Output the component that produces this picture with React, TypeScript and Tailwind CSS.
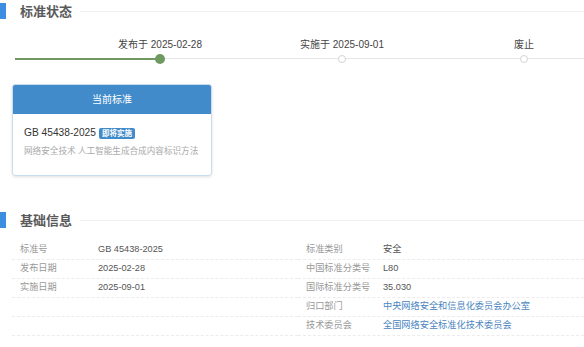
import React from 'react';

const font = { fontFamily: '"Liberation Sans", "Noto Sans CJK SC", sans-serif' };

const SectionTitle = ({ title }: { title: string }) => (
  <div className="flex items-center h-[20px]">
    <div className="w-[6px] h-[16px] bg-[#3d8ee0]" />
    <div className="ml-[14px] text-[13px] font-bold text-[#5a5a5a] leading-none">{title}</div>
    <div className="flex-1 ml-[8px] h-px bg-[#f0f0f0]" />
  </div>
);

const stages = [
  { label: '发布于 2025-02-28', done: true },
  { label: '实施于 2025-09-01', done: false },
  { label: '废止', done: false },
];

const leftRows = [
  ['标准号', 'GB 45438-2025'],
  ['发布日期', '2025-02-28'],
  ['实施日期', '2025-09-01'],
  ['', ''],
  ['', ''],
];

const rightRows: [string, string, boolean][] = [
  ['标准类别', '安全', false],
  ['中国标准分类号', 'L80', false],
  ['国际标准分类号', '35.030', false],
  ['归口部门', '中央网络安全和信息化委员会办公室', true],
  ['技术委员会', '全国网络安全标准化技术委员会', true],
];

export default function App() {
  return (
    <div className="w-[584px] h-[347px] bg-white overflow-hidden" style={font}>
      <div className="pt-[1px]">
        <SectionTitle title="标准状态" />
      </div>

      {/* timeline */}
      <div className="mt-[17px]">
        <div className="flex ml-[69px]">
          {stages.map((s) => (
            <div key={s.label} className="w-[182px] shrink-0 text-center text-[10px] text-[#444] leading-[14px]">
              {s.label}
            </div>
          ))}
        </div>
        <div className="relative h-[10px] mt-[2px]">
          <div className="absolute left-[15px] right-0 top-[4px] h-px bg-[#e6e6e6]" />
          <div className="absolute left-[15px] w-[145px] top-[4px] h-[2px] bg-[#6f9960]" />
          <div className="absolute left-[155px] top-0 w-[10px] h-[10px] rounded-full bg-[#6f9960]" />
          <div className="absolute left-[338px] top-[1px] w-[8px] h-[8px] rounded-full bg-white border border-[#d4d4d4]" />
          <div className="absolute left-[520px] top-[1px] w-[8px] h-[8px] rounded-full bg-white border border-[#d4d4d4]" />
        </div>
      </div>

      {/* current standard card */}
      <div className="ml-[12px] mt-[20px] w-[200px] rounded-[3px] border border-[#c9dcee] shadow-[0_1px_3px_rgba(0,0,0,0.12)] overflow-hidden">
        <div className="h-[29px] bg-[#428bca] flex items-center justify-center text-white text-[10px]">
          当前标准
        </div>
        <div className="px-[11px] pt-[13px] pb-[18px]">
          <div className="flex items-center h-[12px]">
            <span className="text-[10.2px] text-[#333]">GB 45438-2025</span>
            <span className="ml-[3px] px-[3px] h-[11px] leading-[11px] rounded-[2px] bg-[#428bca] text-white text-[7.5px] font-bold">
              即将实施
            </span>
          </div>
          <div className="mt-[6px] text-[8.6px] text-[#aaa] leading-[12px] whitespace-nowrap">
            网络安全技术 人工智能生成合成内容标识方法
          </div>
        </div>
      </div>

      <div className="mt-[34px]">
        <SectionTitle title="基础信息" />
      </div>

      {/* info table */}
      <div className="mt-[11px] ml-[12px] flex text-[9.2px]">
        <div className="w-[286px]">
          {leftRows.map(([k, v], i) => (
            <div key={i} className="flex items-center h-[19px] border-b border-dashed border-[#ececec] pl-[8px]">
              <div className="w-[78px] text-[#999]">{k}</div>
              <div className="text-[#555]">{v}</div>
            </div>
          ))}
        </div>
        <div className="flex-1">
          {rightRows.map(([k, v, link], i) => (
            <div key={i} className="flex items-center h-[19px] border-b border-dashed border-[#ececec] pl-[8px]">
              <div className="w-[77px] text-[#999]">{k}</div>
              <div className={link ? 'text-[#4a85c0]' : 'text-[#555]'}>{v}</div>
            </div>
          ))}
        </div>
      </div>
    </div>
  );
}
